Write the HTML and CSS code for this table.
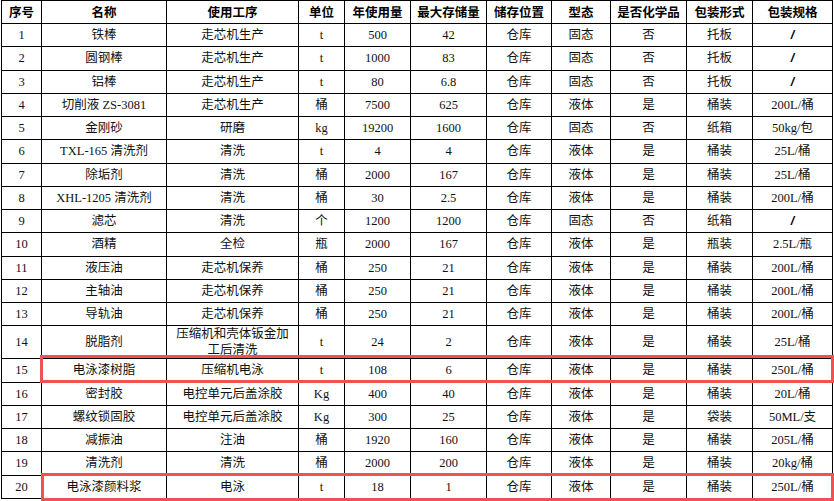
FILE: index.html
```html
<!DOCTYPE html>
<html lang="zh-CN">
<head>
<meta charset="utf-8">
<title>原辅材料表</title>
<link rel="stylesheet" href="styles.css">
</head>
<body>
<div class="sheet">
<table class="tbl">
<colgroup>
<col class="c1"><col class="c2"><col class="c3"><col class="c4"><col class="c5"><col class="c6"><col class="c7"><col class="c8"><col class="c9"><col class="c10"><col class="c11">
</colgroup>
<thead>
<tr class="head"><th>序号</th><th>名称</th><th>使用工序</th><th>单位</th><th>年使用量</th><th>最大存储量</th><th>储存位置</th><th>型态</th><th>是否化学品</th><th>包装形式</th><th>包装规格</th></tr>
</thead>
<tbody>
<tr><td>1</td><td>铁棒</td><td>走芯机生产</td><td>t</td><td>500</td><td>42</td><td>仓库</td><td>固态</td><td>否</td><td>托板</td><td><span class="slash">/</span></td></tr>
<tr><td>2</td><td>圆钢棒</td><td>走芯机生产</td><td>t</td><td>1000</td><td>83</td><td>仓库</td><td>固态</td><td>否</td><td>托板</td><td><span class="slash">/</span></td></tr>
<tr><td>3</td><td>铝棒</td><td>走芯机生产</td><td>t</td><td>80</td><td>6.8</td><td>仓库</td><td>固态</td><td>否</td><td>托板</td><td><span class="slash">/</span></td></tr>
<tr><td>4</td><td>切削液 ZS-3081</td><td>走芯机生产</td><td>桶</td><td>7500</td><td>625</td><td>仓库</td><td>液体</td><td>是</td><td>桶装</td><td>200L/桶</td></tr>
<tr><td>5</td><td>金刚砂</td><td>研磨</td><td>kg</td><td>19200</td><td>1600</td><td>仓库</td><td>固态</td><td>否</td><td>纸箱</td><td>50kg/包</td></tr>
<tr><td>6</td><td>TXL-165 清洗剂</td><td>清洗</td><td>t</td><td>4</td><td>4</td><td>仓库</td><td>液体</td><td>是</td><td>桶装</td><td>25L/桶</td></tr>
<tr><td>7</td><td>除垢剂</td><td>清洗</td><td>桶</td><td>2000</td><td>167</td><td>仓库</td><td>液体</td><td>是</td><td>桶装</td><td>25L/桶</td></tr>
<tr><td>8</td><td>XHL-1205 清洗剂</td><td>清洗</td><td>桶</td><td>30</td><td>2.5</td><td>仓库</td><td>液体</td><td>是</td><td>桶装</td><td>200L/桶</td></tr>
<tr><td>9</td><td>滤芯</td><td>清洗</td><td>个</td><td>1200</td><td>1200</td><td>仓库</td><td>固态</td><td>否</td><td>纸箱</td><td><span class="slash">/</span></td></tr>
<tr><td>10</td><td>酒精</td><td>全检</td><td>瓶</td><td>2000</td><td>167</td><td>仓库</td><td>液体</td><td>是</td><td>瓶装</td><td>2.5L/瓶</td></tr>
<tr><td>11</td><td>液压油</td><td>走芯机保养</td><td>桶</td><td>250</td><td>21</td><td>仓库</td><td>液体</td><td>是</td><td>桶装</td><td>200L/桶</td></tr>
<tr><td>12</td><td>主轴油</td><td>走芯机保养</td><td>桶</td><td>250</td><td>21</td><td>仓库</td><td>液体</td><td>是</td><td>桶装</td><td>200L/桶</td></tr>
<tr><td>13</td><td>导轨油</td><td>走芯机保养</td><td>桶</td><td>250</td><td>21</td><td>仓库</td><td>液体</td><td>是</td><td>桶装</td><td>200L/桶</td></tr>
<tr class="tall"><td>14</td><td>脱脂剂</td><td class="wrap">压缩机和壳体钣金加<br>工后清洗</td><td>t</td><td>24</td><td>2</td><td>仓库</td><td>液体</td><td>是</td><td>桶装</td><td>25L/桶</td></tr>
<tr><td>15</td><td>电泳漆树脂</td><td>压缩机电泳</td><td>t</td><td>108</td><td>6</td><td>仓库</td><td>液体</td><td>是</td><td>桶装</td><td>250L/桶</td></tr>
<tr><td>16</td><td>密封胶</td><td>电控单元后盖涂胶</td><td>Kg</td><td>400</td><td>40</td><td>仓库</td><td>液体</td><td>是</td><td>桶装</td><td>20L/桶</td></tr>
<tr><td>17</td><td>螺纹锁固胶</td><td>电控单元后盖涂胶</td><td>Kg</td><td>300</td><td>25</td><td>仓库</td><td>液体</td><td>是</td><td>袋装</td><td>50ML/支</td></tr>
<tr><td>18</td><td>减振油</td><td>注油</td><td>桶</td><td>1920</td><td>160</td><td>仓库</td><td>液体</td><td>是</td><td>桶装</td><td>205L/桶</td></tr>
<tr><td>19</td><td>清洗剂</td><td>清洗</td><td>桶</td><td>2000</td><td>200</td><td>仓库</td><td>液体</td><td>是</td><td>桶装</td><td>20kg/桶</td></tr>
<tr><td>20</td><td>电泳漆颜料浆</td><td>电泳</td><td>t</td><td>18</td><td>1</td><td>仓库</td><td>液体</td><td>是</td><td>桶装</td><td>250L/桶</td></tr>
</tbody>
</table>
<div class="mark mark-a"></div>
<div class="mark mark-b"></div>
</div>
</body>
</html>
```
FILE: styles.css
```css
html, body {
  margin: 0;
  padding: 0;
  background: #fff;
}
body {
  width: 834px;
  height: 501px;
  overflow: hidden;
}
.sheet {
  position: relative;
  width: 834px;
  height: 501px;
  padding-left: 1px;
  box-sizing: border-box;
}
.tbl {
  border-collapse: collapse;
  table-layout: fixed;
  width: 831px;
  font-family: "Liberation Serif", "Noto Sans CJK SC", serif;
  font-size: 12.5px;
  color: #111;
}
.c1 { width: 40px; }
.c2 { width: 125px; }
.c3 { width: 132px; }
.c4 { width: 46px; }
.c5 { width: 66px; }
.c6 { width: 76px; }
.c7 { width: 65px; }
.c8 { width: 59px; }
.c9 { width: 76px; }
.c10 { width: 66px; }
.c11 { width: 80px; }
.tbl th, .tbl td {
  border: 1px solid #000;
  padding: 0;
  text-align: center;
  vertical-align: middle;
  white-space: nowrap;
  line-height: 16px;
}
.tbl th {
  font-family: "Noto Sans CJK SC", sans-serif;
  font-weight: 700;
  font-size: 12.5px;
  color: #000;
}
.head { height: 23px; }
.tbl tbody tr { height: 23.25px; }
.tbl tbody tr.tall { height: 32px; }
.tbl td.wrap {
  line-height: 16px;
}
.slash {
  font-family: "Liberation Sans", sans-serif;
  font-weight: 700;
  font-style: italic;
  color: #000;
}
.mark {
  position: absolute;
  border: 3px solid #f05252;
  box-sizing: border-box;
  pointer-events: none;
}
.mark-a {
  left: 40px;
  top: 355px;
  width: 794px;
  height: 28px;
}
.mark-b {
  left: 41px;
  top: 473px;
  width: 793px;
  height: 28px;
}
```
